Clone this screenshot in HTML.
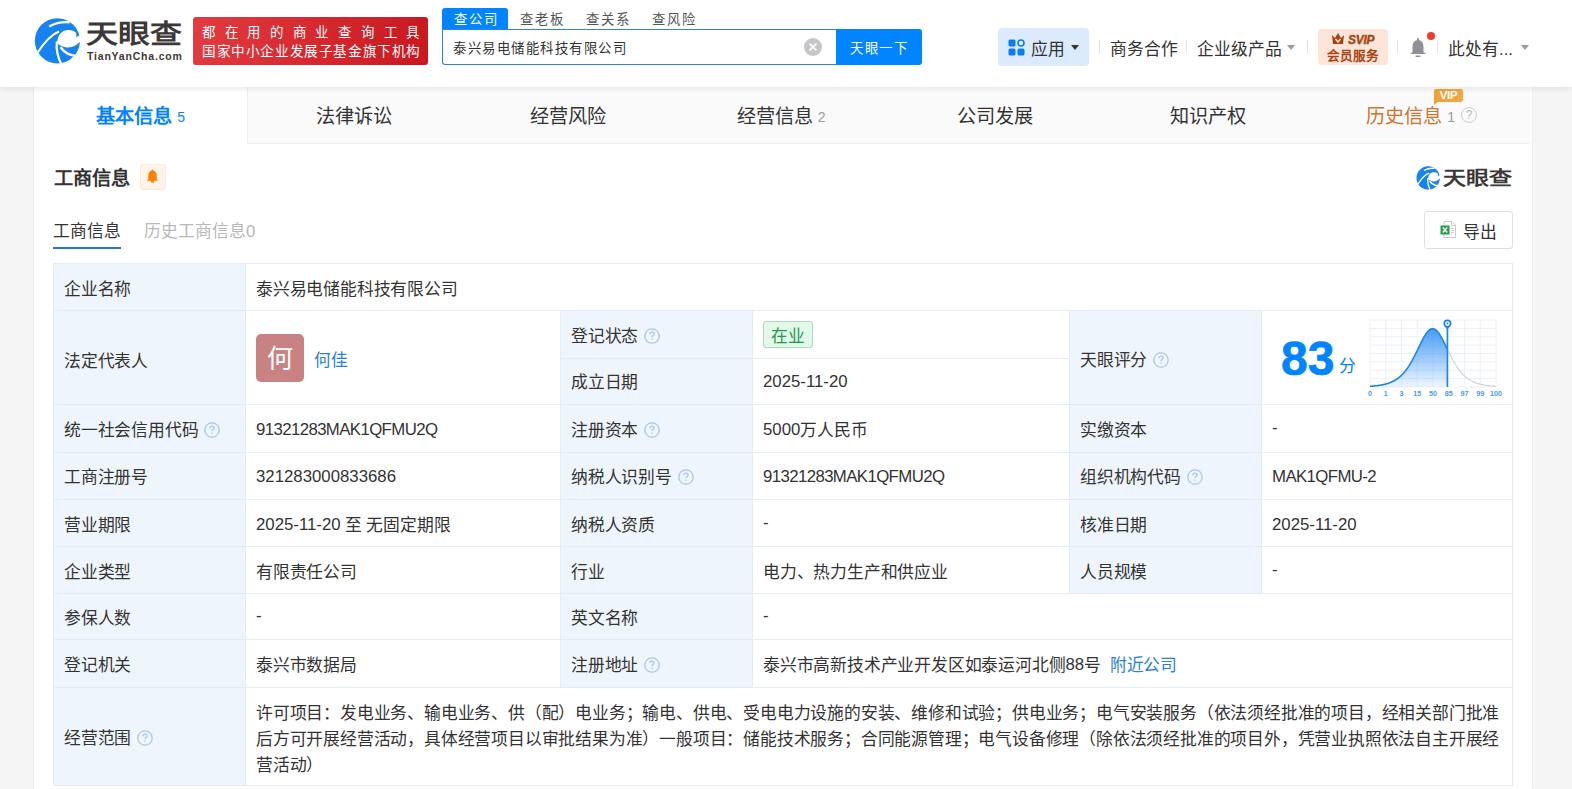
<!DOCTYPE html>
<html lang="zh-CN">
<head>
<meta charset="utf-8">
<style>
*{margin:0;padding:0;box-sizing:border-box}
html,body{width:1572px;height:789px;overflow:hidden}
body{background:#f5f5f5;font-family:"Liberation Sans",sans-serif;color:#333;position:relative}
.a{position:absolute;white-space:nowrap}
#hdr{position:absolute;left:0;top:0;width:1572px;height:87px;background:#fff;box-shadow:0 1.5px 6px rgba(0,0,0,.085);z-index:2}
#main{position:absolute;left:34px;top:87px;width:1498px;height:702px;background:#fff;box-shadow:0 0 1.5px rgba(0,0,0,.12)}
.t17{font-size:16.8px;line-height:20px}
.t14{font-size:14.4px;line-height:18px}
.sep{position:absolute;width:1px;height:13px;background:#e3e3e3;top:40px}
.caret{position:absolute;width:0;height:0;border-left:4px solid transparent;border-right:4px solid transparent;border-top:5px solid #333}
.tab{position:absolute;top:1.5px;width:213.5px;height:56px;text-align:center;font-size:19.2px;line-height:56px;color:#333}
.tab sup{font-size:14px;color:#999;vertical-align:1px;margin-left:5px}
.lbl{position:absolute;background:#eff5fc}
.hl{position:absolute;height:1px;background:#e3ebf3}
.vl{position:absolute;width:1px;background:#e3ebf3}
.q{display:inline-block;width:15px;height:15px;border:1px solid #b7cfe8;border-radius:50%;color:#a9c4e2;font-size:11px;line-height:13px;text-align:center;vertical-align:1px;margin-left:6px}
.qi{display:inline-block;vertical-align:-2px;margin-left:6px}
.txt{position:absolute;white-space:nowrap;font-size:16.8px;line-height:20px;color:#333;letter-spacing:-0.2px}
.en{position:relative;letter-spacing:0}
</style>
</head>
<body>
<div id="hdr">
  <!-- logo -->
  <svg class="a" style="left:30px;top:14px" width="56" height="54" viewBox="0 0 818 789">
    <circle cx="400" cy="392" r="330" fill="#1683f0"/>
    <path d="M400 425 C395 300 470 232 560 232 C650 232 705 280 668 335 L770 300 L770 352 C700 470 600 500 520 487 C455 472 415 452 400 425Z" fill="#fff"/>
    <path d="M280 182 C380 130 480 110 580 122" stroke="#fff" stroke-width="32" fill="none"/>
    <path d="M95 590 C200 420 300 300 425 255" stroke="#fff" stroke-width="30" fill="none"/>
    <path d="M392 400 C378 520 410 650 470 760" stroke="#fff" stroke-width="32" fill="none"/>
    <path d="M445 485 C500 560 580 610 700 615" stroke="#fff" stroke-width="34" fill="none"/>
  </svg>
  <div class="a" style="left:86px;top:18.5px;font-size:32px;line-height:36px;font-weight:bold;color:#3d3939;letter-spacing:0px;transform:scale(1.0,0.82);transform-origin:0 0">天眼查</div>
  <div class="a" style="left:87px;top:49.5px;font-size:10.5px;line-height:12px;font-weight:bold;color:#3d3939;letter-spacing:0.8px">TianYanCha.com</div>
  <!-- red banner -->
  <div class="a" style="left:193px;top:17px;width:235px;height:48px;border-radius:3px;background:linear-gradient(100deg,#e23b40,#c9181f)"></div>
  <div class="a" style="left:202px;top:24px;font-size:13.4px;line-height:18px;color:#fff;letter-spacing:9.7px;font-weight:500">都在用的商业查询工具</div>
  <div class="a" style="left:202px;top:43px;font-size:13.6px;line-height:18px;color:#fff;letter-spacing:0.6px">国家中小企业发展子基金旗下机构</div>
  <!-- search tabs -->
  <div class="a" style="left:442px;top:8px;width:66px;height:21px;background:#0084ff;border-radius:3px 3px 0 0"></div>
  <div class="a t14" style="left:454px;top:11px;color:#fff;font-size:13.4px;letter-spacing:2px">查公司</div>
  <div class="a t14" style="left:520px;top:11px;color:#555;font-size:13.4px;letter-spacing:2px">查老板</div>
  <div class="a t14" style="left:586px;top:11px;color:#555;font-size:13.4px;letter-spacing:2px">查关系</div>
  <div class="a t14" style="left:652px;top:11px;color:#555;font-size:13.4px;letter-spacing:2px">查风险</div>
  <div class="a" style="left:442px;top:29px;width:396px;height:36px;border:1px solid #2f83dc;border-right:none;border-radius:0 0 0 3px;background:#fff"></div>
  <div class="a t14" style="left:453px;top:39.5px;color:#333;font-size:13.4px;letter-spacing:1.55px">泰兴易电储能科技有限公司</div>
  <div class="a" style="left:804px;top:38px;width:18px;height:18px;border-radius:50%;background:#c4c6ca"></div>
  <svg class="a" style="left:804px;top:38px" width="18" height="18" viewBox="0 0 18 18"><path d="M5.6 5.6L12.4 12.4M12.4 5.6L5.6 12.4" stroke="#fff" stroke-width="1.6"/></svg>
  <div class="a" style="left:836px;top:29px;width:86px;height:36px;background:#0084ff;border-radius:0 3px 3px 0"></div>
  <div class="a t14" style="left:850px;top:39.5px;font-size:13.4px;letter-spacing:1.55px;color:#fff">天眼一下</div>
  <!-- right nav -->
  <div class="a" style="left:998px;top:28px;width:91px;height:38px;border-radius:4px;background:#dcebfc"></div>
  <svg class="a" style="left:1008px;top:39px" width="18" height="18" viewBox="0 0 18 18">
    <rect x="0.5" y="0.5" width="7" height="7" rx="1.5" fill="#0b7df0"/>
    <circle cx="13" cy="4" r="3" fill="none" stroke="#0b7df0" stroke-width="1.6"/>
    <rect x="0.5" y="9.5" width="7" height="7" rx="1.5" fill="#0b7df0"/>
    <rect x="9.5" y="9.5" width="7" height="7" rx="1.5" fill="#0b7df0"/>
  </svg>
  <div class="a t17" style="left:1031px;top:40px;color:#333">应用</div>
  <div class="caret" style="left:1071px;top:45px"></div>
  <div class="sep" style="left:1099px"></div>
  <div class="a t17" style="left:1110px;top:40px;color:#333">商务合作</div>
  <div class="sep" style="left:1186px"></div>
  <div class="a t17" style="left:1197px;top:40px;color:#333">企业级产品</div>
  <div class="caret" style="left:1287px;top:45px;border-top-color:#999"></div>
  <div class="sep" style="left:1307px"></div>
  <div class="a" style="left:1318px;top:29px;width:70px;height:36px;border-radius:4px;background:#fde5da"></div>
  <svg class="a" style="left:1331px;top:32px" width="14" height="13" viewBox="0 0 14 13">
    <path d="M1 3 L4 6 L7 1 L10 6 L13 3 L12 12 L2 12Z" fill="#a9420f"/>
    <path d="M4.5 7 L7 10 L9.5 7" stroke="#fde5da" stroke-width="1.5" fill="none"/>
  </svg>
  <div class="a" style="left:1348px;top:33.5px;font-size:12px;line-height:13px;font-weight:bold;font-style:italic;color:#a9420f;-webkit-text-stroke:0.35px #a9420f;letter-spacing:-0.3px">SVIP</div>
  <div class="a" style="left:1327px;top:47.5px;font-size:12.6px;line-height:16px;font-weight:bold;color:#aa4410">会员服务</div>
  <div class="sep" style="left:1397px"></div>
  <svg class="a" style="left:1409px;top:38px" width="18" height="20" viewBox="0 0 18 20">
    <rect x="8" y="0" width="2" height="3" rx="1" fill="#8e9196"/>
    <path d="M9 2 C4.5 2 3.5 6 3.5 9 L3.5 14 L1 16 L17 16 L14.5 14 L14.5 9 C14.5 6 13.5 2 9 2Z" fill="#8e9196"/>
    <rect x="6.5" y="17.5" width="5" height="1.6" rx="0.8" fill="#8e9196"/>
  </svg>
  <div class="a" style="left:1427px;top:32px;width:8px;height:8px;border-radius:50%;background:#f03a2e"></div>
  <div class="sep" style="left:1437px"></div>
  <div class="a t17" style="left:1448px;top:40px;color:#333">此处有...</div>
  <div class="caret" style="left:1521px;top:45px;border-top-color:#999"></div>
</div>

<div id="main">
  <!-- tabs -->
  <div class="a" style="left:0;top:0;width:1496px;height:57px;background:#fafafa;border-bottom:1px solid #eee"></div>
  <div class="a" style="left:0;top:0;width:213.5px;height:57px;background:#fff"></div>
  <div class="a" style="left:213px;top:0;width:1px;height:57px;background:#eeeeee"></div>
  <div class="tab" style="left:0;color:#0084ff;font-weight:bold">基本信息<sup style="color:#0084ff;font-weight:normal">5</sup></div>
  <div class="tab" style="left:213.5px">法律诉讼</div>
  <div class="tab" style="left:427px">经营风险</div>
  <div class="tab" style="left:640.5px">经营信息<sup>2</sup></div>
  <div class="tab" style="left:854px">公司发展</div>
  <div class="tab" style="left:1067.5px">知识产权</div>
  <div class="tab" style="left:1281px;color:#cf722b">历史信息<sup>1</sup><span class="q" style="width:16px;height:16px;border-color:#c8ccd0;color:#b8bcc0;font-size:12px;line-height:14px;vertical-align:4px">?</span></div>
  <div class="a" style="left:1400px;top:2px;width:29px;height:13px;background:linear-gradient(90deg,#eea23a,#f0a840);border-radius:2px;color:#fff;font-size:11.5px;line-height:13px;font-weight:bold;text-align:center;letter-spacing:-0.3px">VIP</div>
  <div class="a" style="left:1400px;top:14px;width:0;height:0;border-top:4px solid #ef9a2c;border-right:5px solid transparent"></div>

  <!-- section title -->
  <div class="a" style="left:20px;top:80px;font-size:19.2px;line-height:24px;font-weight:bold;color:#333">工商信息</div>
  <div class="a" style="left:106px;top:77px;width:26px;height:26px;border-radius:3px;background:#fff4e9;border:1px solid #fde9d8"></div>
  <svg class="a" style="left:111px;top:82px" width="15" height="15" viewBox="0 0 15 15">
    <path d="M7.5 1.6 C4.6 1.6 3.3 3.8 3.3 6.6 L3.3 10.3 L1.6 11.8 L13.4 11.8 L11.7 10.3 L11.7 6.6 C11.7 3.8 10.4 1.6 7.5 1.6Z" fill="#ff8000"/>
    <circle cx="7.5" cy="1.5" r="0.9" fill="#ff8000"/>
    <ellipse cx="7.5" cy="12.4" rx="1.7" ry="1.3" fill="#ff8000"/>
  </svg>
  <!-- right logo -->
  <svg class="a" style="left:1380px;top:76.5px" width="29" height="28" viewBox="0 0 818 789">
    <circle cx="400" cy="392" r="330" fill="#1683f0"/>
    <path d="M400 425 C395 300 470 232 560 232 C650 232 705 280 668 335 L770 300 L770 352 C700 470 600 500 520 487 C455 472 415 452 400 425Z" fill="#fff"/>
    <path d="M280 182 C380 130 480 110 580 122" stroke="#fff" stroke-width="38" fill="none"/>
    <path d="M95 590 C200 420 300 300 425 255" stroke="#fff" stroke-width="36" fill="none"/>
    <path d="M392 400 C378 520 410 650 470 760" stroke="#fff" stroke-width="38" fill="none"/>
    <path d="M445 485 C500 560 580 610 700 615" stroke="#fff" stroke-width="40" fill="none"/>
  </svg>
  <div class="a" style="left:1409px;top:81px;font-size:23px;line-height:26px;font-weight:bold;color:#3d3939;letter-spacing:0px;transform:scale(1,0.82);transform-origin:0 0">天眼查</div>

  <!-- sub tabs -->
  <div class="a t17" style="left:19px;top:135px;color:#333">工商信息</div>
  <div class="a" style="left:19px;top:159.5px;width:68px;height:2.5px;background:#2274d2"></div>
  <div class="a t17" style="left:110px;top:135px;color:#b8b8b8">历史工商信息0</div>
  <div class="a" style="left:1390px;top:124px;width:89px;height:38px;border:1px solid #e0e0e0;border-radius:3px"></div>
  <svg class="a" style="left:1406px;top:134px" width="17" height="17" viewBox="0 0 17 17">
    <path d="M4 0.5 H12 L15.5 4 V16.5 H4Z" fill="#fff" stroke="#ccc"/>
    <path d="M11.5 1 V4.5 H15" fill="none" stroke="#ccc"/>
    <rect x="0.5" y="4.5" width="9" height="9" fill="#1f9e50"/>
    <path d="M2.8 6.5 L7.2 11.5 M7.2 6.5 L2.8 11.5" stroke="#fff" stroke-width="1.4"/>
    <path d="M11 7.5H14M11 9.5H14M11 11.5H14" stroke="#bbb" stroke-width="0.8"/>
  </svg>
  <div class="a t17" style="left:1429px;top:136px;color:#333">导出</div>
</div>

<!-- TABLE (page coordinates) -->
<div id="tbl">
<div class="a" style="left:53px;top:263px;width:1460px;height:523px;background:#fff"></div>
<div class="a" style="left:53px;top:263px;width:192px;height:522px;background:#eff5fc"></div>
<div class="a" style="left:560px;top:310px;width:192px;height:377px;background:#eff5fc"></div>
<div class="a" style="left:1069px;top:310px;width:192px;height:283px;background:#eff5fc"></div>
<div class="a" style="left:53px;top:263px;width:1460px;height:1px;background:#e3ebf3"></div>
<div class="a" style="left:53px;top:310px;width:1460px;height:1px;background:#e3ebf3"></div>
<div class="a" style="left:53px;top:404px;width:1460px;height:1px;background:#e3ebf3"></div>
<div class="a" style="left:53px;top:452px;width:1460px;height:1px;background:#e3ebf3"></div>
<div class="a" style="left:53px;top:499px;width:1460px;height:1px;background:#e3ebf3"></div>
<div class="a" style="left:53px;top:546px;width:1460px;height:1px;background:#e3ebf3"></div>
<div class="a" style="left:53px;top:593px;width:1460px;height:1px;background:#e3ebf3"></div>
<div class="a" style="left:53px;top:639px;width:1460px;height:1px;background:#e3ebf3"></div>
<div class="a" style="left:53px;top:687px;width:1460px;height:1px;background:#e3ebf3"></div>
<div class="a" style="left:53px;top:785px;width:1460px;height:1px;background:#e3ebf3"></div>
<div class="a" style="left:560px;top:358px;width:509px;height:1px;background:#e3ebf3"></div>
<div class="a" style="left:53px;top:263px;width:1px;height:523px;background:#e3ebf3"></div>
<div class="a" style="left:1512px;top:263px;width:1px;height:523px;background:#e3ebf3"></div>
<div class="a" style="left:245px;top:263px;width:1px;height:522px;background:#e3ebf3"></div>
<div class="a" style="left:560px;top:310px;width:1px;height:377px;background:#e3ebf3"></div>
<div class="a" style="left:752px;top:310px;width:1px;height:377px;background:#e3ebf3"></div>
<div class="a" style="left:1069px;top:310px;width:1px;height:283px;background:#e3ebf3"></div>
<div class="a" style="left:1261px;top:310px;width:1px;height:283px;background:#e3ebf3"></div>
<div class="txt" style="left:64px;top:280px;">企业名称</div>
<div class="txt" style="left:256px;top:280px;">泰兴易电储能科技有限公司</div>
<div class="txt" style="left:64px;top:352px;">法定代表人</div>
<div class="a" style="left:256px;top:334px;width:48px;height:48px;border-radius:5px;background:#c98282;color:#fff;font-size:26px;line-height:50px;text-align:center">何</div>
<div class="txt" style="left:314px;top:351px;color:#2a80da">何佳</div>
<div class="txt" style="left:571px;top:327px;">登记状态<svg class="qi" width="16" height="16" viewBox="0 0 16 16"><circle cx="8" cy="8" r="7.2" fill="none" stroke="#aac6e6" stroke-width="1.3"/><path d="M5.9 6.2 C5.9 4.9 6.8 4.2 8 4.2 C9.2 4.2 10.1 4.9 10.1 6 C10.1 7.3 8.1 7.5 8.1 9.2" fill="none" stroke="#aac6e6" stroke-width="1.3"/><circle cx="8.1" cy="11.3" r="0.75" fill="#aac6e6"/></svg></div>
<div class="a" style="left:763px;top:321px;width:50px;height:27px;border-radius:3px;background:#e2f8e9;border:1px solid #a9dcb7"></div>
<div class="txt" style="left:771px;top:327px;color:#1f9a4c">在业</div>
<div class="txt" style="left:571px;top:373px;">成立日期</div>
<div class="txt" style="left:763px;top:373px;"><span class="en" style="top:-1.5px">2025-11-20</span></div>
<div class="txt" style="left:1080px;top:351px;">天眼评分<svg class="qi" width="16" height="16" viewBox="0 0 16 16"><circle cx="8" cy="8" r="7.2" fill="none" stroke="#aac6e6" stroke-width="1.3"/><path d="M5.9 6.2 C5.9 4.9 6.8 4.2 8 4.2 C9.2 4.2 10.1 4.9 10.1 6 C10.1 7.3 8.1 7.5 8.1 9.2" fill="none" stroke="#aac6e6" stroke-width="1.3"/><circle cx="8.1" cy="11.3" r="0.75" fill="#aac6e6"/></svg></div>
<div class="txt" style="left:64px;top:421px;">统一社会信用代码<svg class="qi" width="16" height="16" viewBox="0 0 16 16"><circle cx="8" cy="8" r="7.2" fill="none" stroke="#aac6e6" stroke-width="1.3"/><path d="M5.9 6.2 C5.9 4.9 6.8 4.2 8 4.2 C9.2 4.2 10.1 4.9 10.1 6 C10.1 7.3 8.1 7.5 8.1 9.2" fill="none" stroke="#aac6e6" stroke-width="1.3"/><circle cx="8.1" cy="11.3" r="0.75" fill="#aac6e6"/></svg></div>
<div class="txt" style="left:256px;top:421px;"><span class="en" style="top:-1.5px;letter-spacing:-0.6px">91321283MAK1QFMU2Q</span></div>
<div class="txt" style="left:571px;top:421px;">注册资本<svg class="qi" width="16" height="16" viewBox="0 0 16 16"><circle cx="8" cy="8" r="7.2" fill="none" stroke="#aac6e6" stroke-width="1.3"/><path d="M5.9 6.2 C5.9 4.9 6.8 4.2 8 4.2 C9.2 4.2 10.1 4.9 10.1 6 C10.1 7.3 8.1 7.5 8.1 9.2" fill="none" stroke="#aac6e6" stroke-width="1.3"/><circle cx="8.1" cy="11.3" r="0.75" fill="#aac6e6"/></svg></div>
<div class="txt" style="left:763px;top:421px;"><span class="en" style="top:-1.5px">5000</span>万人民币</div>
<div class="txt" style="left:1080px;top:421px;">实缴资本</div>
<div class="txt" style="left:1272px;top:421px;"><span class="en" style="top:-3px">-</span></div>
<div class="txt" style="left:64px;top:468px;">工商注册号</div>
<div class="txt" style="left:256px;top:468px;"><span class="en" style="top:-1.5px">321283000833686</span></div>
<div class="txt" style="left:571px;top:468px;">纳税人识别号<svg class="qi" width="16" height="16" viewBox="0 0 16 16"><circle cx="8" cy="8" r="7.2" fill="none" stroke="#aac6e6" stroke-width="1.3"/><path d="M5.9 6.2 C5.9 4.9 6.8 4.2 8 4.2 C9.2 4.2 10.1 4.9 10.1 6 C10.1 7.3 8.1 7.5 8.1 9.2" fill="none" stroke="#aac6e6" stroke-width="1.3"/><circle cx="8.1" cy="11.3" r="0.75" fill="#aac6e6"/></svg></div>
<div class="txt" style="left:763px;top:468px;"><span class="en" style="top:-1.5px;letter-spacing:-0.6px">91321283MAK1QFMU2Q</span></div>
<div class="txt" style="left:1080px;top:468px;">组织机构代码<svg class="qi" width="16" height="16" viewBox="0 0 16 16"><circle cx="8" cy="8" r="7.2" fill="none" stroke="#aac6e6" stroke-width="1.3"/><path d="M5.9 6.2 C5.9 4.9 6.8 4.2 8 4.2 C9.2 4.2 10.1 4.9 10.1 6 C10.1 7.3 8.1 7.5 8.1 9.2" fill="none" stroke="#aac6e6" stroke-width="1.3"/><circle cx="8.1" cy="11.3" r="0.75" fill="#aac6e6"/></svg></div>
<div class="txt" style="left:1272px;top:468px;"><span class="en" style="top:-1.5px;letter-spacing:-0.6px">MAK1QFMU-2</span></div>
<div class="txt" style="left:64px;top:516px;">营业期限</div>
<div class="txt" style="left:256px;top:516px;"><span class="en" style="top:-1.5px">2025-11-20</span> 至 无固定期限</div>
<div class="txt" style="left:571px;top:516px;">纳税人资质</div>
<div class="txt" style="left:763px;top:516px;"><span class="en" style="top:-3px">-</span></div>
<div class="txt" style="left:1080px;top:516px;">核准日期</div>
<div class="txt" style="left:1272px;top:516px;"><span class="en" style="top:-1.5px">2025-11-20</span></div>
<div class="txt" style="left:64px;top:563px;">企业类型</div>
<div class="txt" style="left:256px;top:563px;">有限责任公司</div>
<div class="txt" style="left:571px;top:563px;">行业</div>
<div class="txt" style="left:763px;top:563px;">电力、热力生产和供应业</div>
<div class="txt" style="left:1080px;top:563px;">人员规模</div>
<div class="txt" style="left:1272px;top:563px;"><span class="en" style="top:-3px">-</span></div>
<div class="txt" style="left:64px;top:609px;">参保人数</div>
<div class="txt" style="left:256px;top:609px;"><span class="en" style="top:-3px">-</span></div>
<div class="txt" style="left:571px;top:609px;">英文名称</div>
<div class="txt" style="left:763px;top:609px;"><span class="en" style="top:-3px">-</span></div>
<div class="txt" style="left:64px;top:656px;">登记机关</div>
<div class="txt" style="left:256px;top:656px;">泰兴市数据局</div>
<div class="txt" style="left:571px;top:656px;">注册地址<svg class="qi" width="16" height="16" viewBox="0 0 16 16"><circle cx="8" cy="8" r="7.2" fill="none" stroke="#aac6e6" stroke-width="1.3"/><path d="M5.9 6.2 C5.9 4.9 6.8 4.2 8 4.2 C9.2 4.2 10.1 4.9 10.1 6 C10.1 7.3 8.1 7.5 8.1 9.2" fill="none" stroke="#aac6e6" stroke-width="1.3"/><circle cx="8.1" cy="11.3" r="0.75" fill="#aac6e6"/></svg></div>
<div class="txt" style="left:763px;top:656px;">泰兴市高新技术产业开发区如泰运河北侧<span class="en" style="top:-1.5px">88</span>号<span style="color:#2a80da;margin-left:9px">附近公司</span></div>
<div class="txt" style="left:64px;top:729px;">经营范围<svg class="qi" width="16" height="16" viewBox="0 0 16 16"><circle cx="8" cy="8" r="7.2" fill="none" stroke="#aac6e6" stroke-width="1.3"/><path d="M5.9 6.2 C5.9 4.9 6.8 4.2 8 4.2 C9.2 4.2 10.1 4.9 10.1 6 C10.1 7.3 8.1 7.5 8.1 9.2" fill="none" stroke="#aac6e6" stroke-width="1.3"/><circle cx="8.1" cy="11.3" r="0.75" fill="#aac6e6"/></svg></div>
<div class="txt" style="left:256px;top:700.5px;line-height:26px;letter-spacing:-0.2px">许可项目：发电业务、输电业务、供（配）电业务；输电、供电、受电电力设施的安装、维修和试验；供电业务；电气安装服务（依法须经批准的项目，经相关部门批准<br>后方可开展经营活动，具体经营项目以审批结果为准）一般项目：储能技术服务；合同能源管理；电气设备修理（除依法须经批准的项目外，凭营业执照依法自主开展经<br>营活动）</div>
<div class="a" style="left:1281px;top:331.5px;font-size:48px;line-height:54px;font-weight:bold;color:#0084ff;-webkit-text-stroke:0.7px #0084ff">83</div>
<div class="txt" style="left:1339px;top:357px;color:#0084ff;font-size:16.8px">分</div>
<svg class="a" style="left:1366px;top:316px" width="138" height="81" viewBox="-4 -4 138 81"><defs><linearGradient id="gf" x1="0" y1="0" x2="0" y2="1"><stop offset="0" stop-color="#3d96f5" stop-opacity="0.95"/><stop offset="1" stop-color="#3d96f5" stop-opacity="0.08"/></linearGradient></defs><line x1="0.0" y1="0" x2="0.0" y2="67" stroke="#ebf1f8" stroke-width="1"/><line x1="15.75" y1="0" x2="15.75" y2="67" stroke="#ebf1f8" stroke-width="1"/><line x1="31.5" y1="0" x2="31.5" y2="67" stroke="#ebf1f8" stroke-width="1"/><line x1="47.25" y1="0" x2="47.25" y2="67" stroke="#ebf1f8" stroke-width="1"/><line x1="63.0" y1="0" x2="63.0" y2="67" stroke="#ebf1f8" stroke-width="1"/><line x1="78.75" y1="0" x2="78.75" y2="67" stroke="#ebf1f8" stroke-width="1"/><line x1="94.5" y1="0" x2="94.5" y2="67" stroke="#ebf1f8" stroke-width="1"/><line x1="110.25" y1="0" x2="110.25" y2="67" stroke="#ebf1f8" stroke-width="1"/><line x1="126.0" y1="0" x2="126.0" y2="67" stroke="#ebf1f8" stroke-width="1"/><line x1="0" y1="0.0" x2="126" y2="0.0" stroke="#ebf1f8" stroke-width="1"/><line x1="0" y1="8.38" x2="126" y2="8.38" stroke="#ebf1f8" stroke-width="1"/><line x1="0" y1="16.75" x2="126" y2="16.75" stroke="#ebf1f8" stroke-width="1"/><line x1="0" y1="25.12" x2="126" y2="25.12" stroke="#ebf1f8" stroke-width="1"/><line x1="0" y1="33.5" x2="126" y2="33.5" stroke="#ebf1f8" stroke-width="1"/><line x1="0" y1="41.88" x2="126" y2="41.88" stroke="#ebf1f8" stroke-width="1"/><line x1="0" y1="50.25" x2="126" y2="50.25" stroke="#ebf1f8" stroke-width="1"/><line x1="0" y1="58.62" x2="126" y2="58.62" stroke="#ebf1f8" stroke-width="1"/><line x1="0" y1="67.0" x2="126" y2="67.0" stroke="#ebf1f8" stroke-width="1"/><path d="M0.0 66.3 L0.5 66.3 L1.0 66.2 L1.5 66.2 L2.0 66.2 L2.5 66.1 L3.0 66.1 L3.5 66.0 L4.0 66.0 L4.5 65.9 L5.0 65.9 L5.5 65.8 L6.0 65.8 L6.5 65.7 L7.0 65.7 L7.5 65.6 L8.0 65.5 L8.5 65.5 L9.0 65.4 L9.5 65.3 L10.0 65.2 L10.5 65.2 L11.0 65.1 L11.5 65.0 L12.0 64.9 L12.5 64.8 L13.0 64.7 L13.5 64.6 L14.0 64.5 L14.5 64.3 L15.0 64.2 L15.5 64.1 L16.0 64.0 L16.5 63.8 L17.0 63.7 L17.5 63.5 L18.0 63.4 L18.5 63.2 L19.0 63.0 L19.5 62.8 L20.0 62.7 L20.5 62.5 L21.0 62.3 L21.5 62.0 L22.0 61.8 L22.5 61.6 L23.0 61.3 L23.5 61.1 L24.0 60.8 L24.5 60.5 L25.0 60.2 L25.5 59.9 L26.0 59.6 L26.5 59.3 L27.0 59.0 L27.5 58.6 L28.0 58.3 L28.5 57.9 L29.0 57.5 L29.5 57.1 L30.0 56.6 L30.5 56.2 L31.0 55.7 L31.5 55.3 L32.0 54.8 L32.5 54.3 L33.0 53.7 L33.5 53.2 L34.0 52.6 L34.5 52.0 L35.0 51.4 L35.5 50.8 L36.0 50.1 L36.5 49.5 L37.0 48.8 L37.5 48.1 L38.0 47.3 L38.5 46.6 L39.0 45.8 L39.5 45.0 L40.0 44.2 L40.5 43.4 L41.0 42.5 L41.5 41.6 L42.0 40.8 L42.5 39.8 L43.0 38.9 L43.5 38.0 L44.0 37.0 L44.5 36.0 L45.0 35.0 L45.5 34.0 L46.0 33.0 L46.5 32.0 L47.0 31.0 L47.5 30.0 L48.0 28.9 L48.5 27.9 L49.0 26.8 L49.5 25.8 L50.0 24.8 L50.5 23.8 L51.0 22.7 L51.5 21.7 L52.0 20.8 L52.5 19.8 L53.0 18.9 L53.5 17.9 L54.0 17.0 L54.5 16.2 L55.0 15.4 L55.5 14.6 L56.0 13.8 L56.5 13.1 L57.0 12.4 L57.5 11.8 L58.0 11.3 L58.5 10.8 L59.0 10.3 L59.5 9.9 L60.0 9.5 L60.5 9.2 L61.0 9.0 L61.5 8.9 L62.0 8.7 L62.5 8.7 L63.0 8.7 L63.5 8.8 L64.0 8.9 L64.5 9.1 L65.0 9.4 L65.5 9.7 L66.0 10.1 L66.5 10.6 L67.0 11.1 L67.5 11.6 L68.0 12.2 L68.5 12.8 L69.0 13.5 L69.5 14.3 L70.0 15.0 L70.5 15.9 L71.0 16.7 L71.5 17.6 L72.0 18.5 L72.5 19.4 L73.0 20.4 L73.5 21.3 L74.0 22.3 L74.5 23.3 L75.0 24.4 L75.5 25.4 L76.0 26.4 L76.5 27.5 L77.0 28.5 L77.4 67 L0 67Z" fill="url(#gf)"/><path d="M77.5 29.5 L78.0 30.6 L78.5 31.6 L79.0 32.6 L79.5 33.6 L80.0 34.6 L80.5 35.6 L81.0 36.6 L81.5 37.6 L82.0 38.5 L82.5 39.5 L83.0 40.4 L83.5 41.3 L84.0 42.2 L84.5 43.0 L85.0 43.9 L85.5 44.7 L86.0 45.5 L86.5 46.3 L87.0 47.0 L87.5 47.8 L88.0 48.5 L88.5 49.2 L89.0 49.9 L89.5 50.5 L90.0 51.2 L90.5 51.8 L91.0 52.4 L91.5 52.9 L92.0 53.5 L92.5 54.0 L93.0 54.6 L93.5 55.1 L94.0 55.5 L94.5 56.0 L95.0 56.5 L95.5 56.9 L96.0 57.3 L96.5 57.7 L97.0 58.1 L97.5 58.5 L98.0 58.8 L98.5 59.2 L99.0 59.5 L99.5 59.8 L100.0 60.1 L100.5 60.4 L101.0 60.7 L101.5 61.0 L102.0 61.2 L102.5 61.5 L103.0 61.7 L103.5 61.9 L104.0 62.2 L104.5 62.4 L105.0 62.6 L105.5 62.8 L106.0 63.0 L106.5 63.1 L107.0 63.3 L107.5 63.5 L108.0 63.6 L108.5 63.8 L109.0 63.9 L109.5 64.0 L110.0 64.2 L110.5 64.3 L111.0 64.4 L111.5 64.5 L112.0 64.6 L112.5 64.7 L113.0 64.8 L113.5 64.9 L114.0 65.0 L114.5 65.1 L115.0 65.2 L115.5 65.3 L116.0 65.4 L116.5 65.4 L117.0 65.5 L117.5 65.6 L118.0 65.6 L118.5 65.7 L119.0 65.8 L119.5 65.8 L120.0 65.9 L120.5 65.9 L121.0 66.0 L121.5 66.0 L122.0 66.1 L122.5 66.1 L123.0 66.1 L123.5 66.2 L124.0 66.2 L124.5 66.2 L125.0 66.3 L125.5 66.3 L126.0 66.3" fill="none" stroke="#cfd4da" stroke-width="1.2"/><path d="M0.0 66.3 L0.5 66.3 L1.0 66.2 L1.5 66.2 L2.0 66.2 L2.5 66.1 L3.0 66.1 L3.5 66.0 L4.0 66.0 L4.5 65.9 L5.0 65.9 L5.5 65.8 L6.0 65.8 L6.5 65.7 L7.0 65.7 L7.5 65.6 L8.0 65.5 L8.5 65.5 L9.0 65.4 L9.5 65.3 L10.0 65.2 L10.5 65.2 L11.0 65.1 L11.5 65.0 L12.0 64.9 L12.5 64.8 L13.0 64.7 L13.5 64.6 L14.0 64.5 L14.5 64.3 L15.0 64.2 L15.5 64.1 L16.0 64.0 L16.5 63.8 L17.0 63.7 L17.5 63.5 L18.0 63.4 L18.5 63.2 L19.0 63.0 L19.5 62.8 L20.0 62.7 L20.5 62.5 L21.0 62.3 L21.5 62.0 L22.0 61.8 L22.5 61.6 L23.0 61.3 L23.5 61.1 L24.0 60.8 L24.5 60.5 L25.0 60.2 L25.5 59.9 L26.0 59.6 L26.5 59.3 L27.0 59.0 L27.5 58.6 L28.0 58.3 L28.5 57.9 L29.0 57.5 L29.5 57.1 L30.0 56.6 L30.5 56.2 L31.0 55.7 L31.5 55.3 L32.0 54.8 L32.5 54.3 L33.0 53.7 L33.5 53.2 L34.0 52.6 L34.5 52.0 L35.0 51.4 L35.5 50.8 L36.0 50.1 L36.5 49.5 L37.0 48.8 L37.5 48.1 L38.0 47.3 L38.5 46.6 L39.0 45.8 L39.5 45.0 L40.0 44.2 L40.5 43.4 L41.0 42.5 L41.5 41.6 L42.0 40.8 L42.5 39.8 L43.0 38.9 L43.5 38.0 L44.0 37.0 L44.5 36.0 L45.0 35.0 L45.5 34.0 L46.0 33.0 L46.5 32.0 L47.0 31.0 L47.5 30.0 L48.0 28.9 L48.5 27.9 L49.0 26.8 L49.5 25.8 L50.0 24.8 L50.5 23.8 L51.0 22.7 L51.5 21.7 L52.0 20.8 L52.5 19.8 L53.0 18.9 L53.5 17.9 L54.0 17.0 L54.5 16.2 L55.0 15.4 L55.5 14.6 L56.0 13.8 L56.5 13.1 L57.0 12.4 L57.5 11.8 L58.0 11.3 L58.5 10.8 L59.0 10.3 L59.5 9.9 L60.0 9.5 L60.5 9.2 L61.0 9.0 L61.5 8.9 L62.0 8.7 L62.5 8.7 L63.0 8.7 L63.5 8.8 L64.0 8.9 L64.5 9.1 L65.0 9.4 L65.5 9.7 L66.0 10.1 L66.5 10.6 L67.0 11.1 L67.5 11.6 L68.0 12.2 L68.5 12.8 L69.0 13.5 L69.5 14.3 L70.0 15.0 L70.5 15.9 L71.0 16.7 L71.5 17.6 L72.0 18.5 L72.5 19.4 L73.0 20.4 L73.5 21.3 L74.0 22.3 L74.5 23.3 L75.0 24.4 L75.5 25.4 L76.0 26.4 L76.5 27.5 L77.0 28.5" fill="none" stroke="#1f84ea" stroke-width="1.6"/><line x1="77.4" y1="8" x2="77.4" y2="67" stroke="#1f84ea" stroke-width="1.6"/><path d="M77.4 10 C76.2 7.5 73.4 6.5 73.4 3.6 A4 4 0 0 1 81.4 3.6 C81.4 6.5 78.60000000000001 7.5 77.4 10Z" fill="#1f84ea"/><circle cx="77.4" cy="3.6" r="2.3" fill="#fff"/><circle cx="77.4" cy="3.6" r="1" fill="#1f84ea"/><text x="0.0" y="75.5" text-anchor="middle" font-size="7.2" font-weight="bold" font-family="Liberation Sans" fill="#4b9ae8">0</text><text x="15.75" y="75.5" text-anchor="middle" font-size="7.2" font-weight="bold" font-family="Liberation Sans" fill="#4b9ae8">1</text><text x="31.5" y="75.5" text-anchor="middle" font-size="7.2" font-weight="bold" font-family="Liberation Sans" fill="#4b9ae8">3</text><text x="47.25" y="75.5" text-anchor="middle" font-size="7.2" font-weight="bold" font-family="Liberation Sans" fill="#4b9ae8">15</text><text x="63.0" y="75.5" text-anchor="middle" font-size="7.2" font-weight="bold" font-family="Liberation Sans" fill="#4b9ae8">50</text><text x="78.75" y="75.5" text-anchor="middle" font-size="7.2" font-weight="bold" font-family="Liberation Sans" fill="#4b9ae8">85</text><text x="94.5" y="75.5" text-anchor="middle" font-size="7.2" font-weight="bold" font-family="Liberation Sans" fill="#4b9ae8">97</text><text x="110.25" y="75.5" text-anchor="middle" font-size="7.2" font-weight="bold" font-family="Liberation Sans" fill="#4b9ae8">99</text><text x="126.0" y="75.5" text-anchor="middle" font-size="7.2" font-weight="bold" font-family="Liberation Sans" fill="#4b9ae8">100</text></svg>

</div>
</body>
</html>
